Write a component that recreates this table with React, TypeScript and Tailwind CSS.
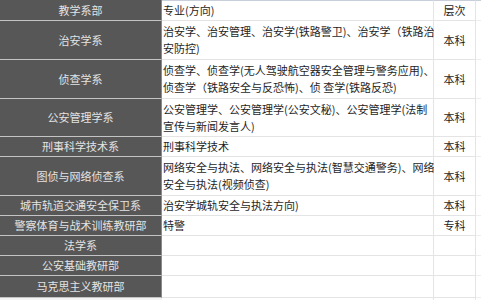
import React from "react";

type Row = { dept: string; lines: string[]; level: string; h: string };

const rows: Row[] = [
  { dept: "治安学系", lines: ["治安学、治安管理、治安学(铁路警卫)、治安学（铁路治", "安防控)"], level: "本科", h: "h-[39px]" },
  { dept: "侦查学系", lines: ["侦查学、侦查学(无人驾驶航空器安全管理与警务应用)、", "侦查学（铁路安全与反恐怖)、侦 查学(铁路反恐)"], level: "本科", h: "h-[39px]" },
  { dept: "公安管理学系", lines: ["公安管理学、公安管理学(公安文秘)、公安管理学(法制", "宣传与新闻发言人)"], level: "本科", h: "h-[38px]" },
  { dept: "刑事科学技术系", lines: ["刑事科学技术"], level: "本科", h: "h-[20px]" },
  { dept: "图侦与网络侦查系", lines: ["网络安全与执法、网络安全与执法(智慧交通警务)、网络", "安全与执法(视频侦查)"], level: "本科", h: "h-[39px]" },
  { dept: "城市轨道交通安全保卫系", lines: ["治安学城轨安全与执法方向)"], level: "本科", h: "h-[20px]" },
  { dept: "警察体育与战术训练教研部", lines: ["特警"], level: "专科", h: "h-[20px]" },
  { dept: "法学系", lines: [], level: "", h: "h-[20px]" },
  { dept: "公安基础教研部", lines: [], level: "", h: "h-[20px]" },
  { dept: "马克思主义教研部", lines: [], level: "", h: "h-[22px]" },
];

function RowView({ r }: { r: Row }) {
  return (
    <div className={`flex ${r.h}`}>
      <div className="w-[162px] shrink-0 bg-[#575757] border-b border-b-[#c4c4c4] border-r border-r-[#8a8a8a] flex items-center justify-center text-[#e4e4e4]">
        <span className="whitespace-nowrap">{r.dept}</span>
      </div>
      <div className="w-[272px] shrink-0 bg-white border-b border-r border-[#e4e4e4] flex flex-col justify-center pl-[1px] text-[#1e1e1e]">
        {r.lines.map((l, i) => (
          <div key={i} className="whitespace-nowrap leading-[17px]">{l}</div>
        ))}
      </div>
      <div className="w-[42px] shrink-0 bg-white border-b border-r border-[#e4e4e4] flex items-center justify-center text-[#1e1e1e]">
        {r.level}
      </div>
      <div className="flex-1 bg-white border-b border-[#eeeeee]" />
    </div>
  );
}

export default function App() {
  return (
    <div
      className="w-[481px] h-[300px] overflow-hidden bg-white text-[11px] leading-[17px]"
      style={{ fontFamily: '"Noto Sans CJK SC", "Noto Sans", sans-serif' }}
    >
      <div className="flex h-[21px]">
        <div className="w-[162px] shrink-0 bg-[#575757] border-b border-b-[#c4c4c4] border-r border-r-[#8a8a8a] flex items-center justify-center text-[#e4e4e4]">
          教学系部
        </div>
        <div className="w-[272px] shrink-0 bg-white border-t border-t-[#c9cedb] border-b border-r border-[#e4e4e4] flex items-center pl-[1px] text-[#1e1e1e]">
          专业(方向)
        </div>
        <div className="w-[42px] shrink-0 bg-white border-t border-t-[#c9cedb] border-b border-r border-[#e4e4e4] flex items-center justify-center text-[#1e1e1e]">
          层次
        </div>
        <div className="flex-1 bg-white border-t border-t-[#c9cedb] border-b border-[#eeeeee]" />
      </div>
      {rows.map((r, i) => (
        <RowView key={i} r={r} />
      ))}
      <div className="flex h-[20px]">
        <div className="w-[162px] shrink-0 bg-[#f4f4f4]" />
        <div className="w-[272px] shrink-0 border-r border-[#e4e4e4]" />
        <div className="w-[42px] shrink-0 border-r border-[#e4e4e4]" />
      </div>
    </div>
  );
}
